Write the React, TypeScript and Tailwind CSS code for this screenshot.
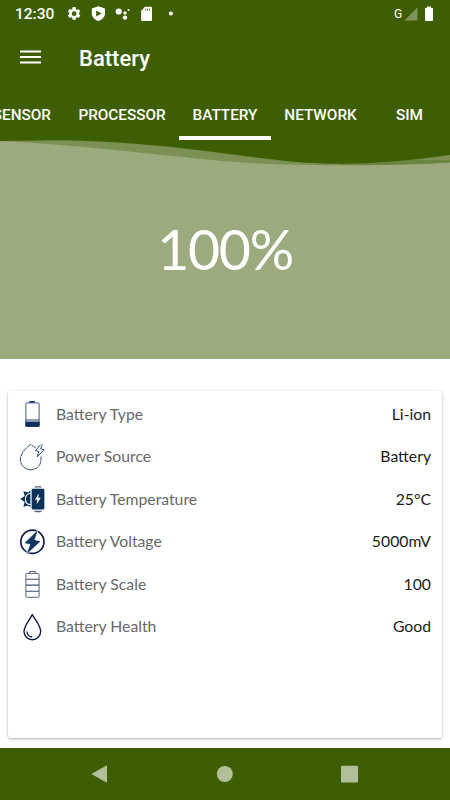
import type { ReactNode } from "react";

const tabs = [
  { label: "SENSOR", width: "w-[79px]" },
  { label: "PROCESSOR", width: "w-[114px]" },
  { label: "BATTERY", width: "w-[92px]", active: true },
  { label: "NETWORK", width: "w-[99px]" },
  { label: "SIM", width: "w-[79px]" },
];

const rows: { icon: ReactNode; label: string; value: string }[] = [
  { icon: <LowBatteryIcon />, label: "Battery Type", value: "Li-ion" },
  { icon: <PowerDropIcon />, label: "Power Source", value: "Battery" },
  { icon: <HotBatteryIcon />, label: "Battery Temperature", value: "25°C" },
  { icon: <VoltageIcon />, label: "Battery Voltage", value: "5000mV" },
  { icon: <ScaleIcon />, label: "Battery Scale", value: "100" },
  { icon: <DropIcon />, label: "Battery Health", value: "Good" },
];

function LowBatteryIcon() {
  return (
    <svg width="28" height="28" viewBox="0 0 28 28" fill="none" stroke="#10315f">
      <path d="M11.3 1.8h5.6" strokeWidth="1.6" />
      <rect x="7.9" y="2.9" width="13.2" height="23.6" rx="1" strokeWidth="0.8" />
      <rect x="7.4" y="21.4" width="14.2" height="5.4" rx="0.8" fill="#10315f" stroke="none" />
      <path d="M8 20h13" strokeWidth="0.9" />
    </svg>
  );
}

function PowerDropIcon() {
  return (
    <svg width="28" height="28" viewBox="0 0 28 28" fill="none" stroke="#173a68" strokeWidth="0.9" strokeLinejoin="round">
      <path d="M17.6 4.9C15.6 3.8 14.2 2.4 12.7 1.5C8.5 4.2 2.4 10 2.4 16.5C2.4 22.5 7 26.8 12.7 26.8C18.6 26.8 23 22.5 23 16.5V13" strokeDasharray="5 0.5" />
      <path d="M22.6 1.6L17.5 7.6L20.8 8.5L19.2 13.8L26 6.7L22.6 5.8L24.4 1.6" />
    </svg>
  );
}

function HotBatteryIcon() {
  return (
    <svg width="28" height="28" viewBox="0 0 28 28" fill="#0b3158">
      <path d="M12.5 5.5L10.2 7.5L5.4 6.2L6.7 11L2.3 14L6.7 17L5.4 21.8L10.2 20.5L12.5 22.5Z" />
      <path d="M12.8 8.2C9.4 8.6 7.4 11 7.4 14C7.4 17 9.4 19.4 12.8 19.8" fill="none" stroke="#fff" strokeWidth="1.1" />
      <rect x="13.2" y="3.3" width="13.6" height="21.6" rx="1.8" stroke="#fff" strokeWidth="0.8" />
      <path d="M16.2 2.5Q16.5 1.3 18 1.2H22Q23.5 1.3 23.8 2.5ZM16 25.8H24Q23.5 27.3 22 27.3H18Q16.5 27.3 16 25.8Z" opacity="0.75" />
      <path d="M20.8 8.2L16.9 14.7H19.3L18.6 19.3L22.8 12.7H20.3Z" fill="#fff" />
    </svg>
  );
}

function VoltageIcon() {
  return (
    <svg width="28" height="28" viewBox="0 0 28 28" fill="none" stroke="#101d4d">
      <circle cx="14.4" cy="13.8" r="11.6" strokeWidth="1.7" />
      <path d="M20.8 0.8L5.8 15.4L11.9 16.5L7.6 27.5L23 13.2L16.9 11.7Z" fill="#0c3560" stroke="#fff" strokeWidth="0.8" />
    </svg>
  );
}

function ScaleIcon() {
  return (
    <svg width="28" height="28" viewBox="0 0 28 28" fill="none" stroke="#3f4f70" strokeWidth="0.9">
      <path d="M11.7 3.4V1.5H17.2V3.4" />
      <rect x="7.9" y="3.4" width="13.2" height="23.9" rx="1.2" />
      <path d="M8 9.2h13M8 15.1h13M8 21.2h13" strokeWidth="1.1" />
    </svg>
  );
}

function DropIcon() {
  return (
    <svg width="28" height="28" viewBox="0 0 28 28" fill="none" stroke="#111c45" strokeWidth="1.4" strokeLinejoin="round">
      <path d="M14.3 1.6C11 7.5 6 13.3 6 18.3C6 23 9.6 26.7 14.3 26.7C19 26.7 22.7 23 22.7 18.3C22.7 13.3 17.6 7.5 14.3 1.6Z" />
      <path d="M8.9 18.5C9.2 21.5 11.2 23.6 14.2 24" strokeWidth="1.3" />
    </svg>
  );
}

function StatusBar() {
  return (
    <div className="flex h-[27px] items-center justify-between pl-[15px] pr-4 text-white">
      <div className="flex items-center">
        <span className="w-[51px] pt-0.5 text-[15.5px] font-medium leading-none">12:30</span>
        <svg width="110" height="18" viewBox="0 0 110 18" fill="#fff">
          <g transform="translate(.2 .8) scale(.66)">
            <path d="M19.14 12.94c.04-.3.06-.61.06-.94s-.02-.64-.07-.94l2.03-1.58a.49.49 0 0 0 .12-.61l-1.92-3.32a.49.49 0 0 0-.59-.22l-2.39.96a7 7 0 0 0-1.62-.94l-.36-2.54A.48.48 0 0 0 13.92 2h-3.84a.48.48 0 0 0-.48.41l-.36 2.54c-.59.24-1.13.57-1.62.94l-2.39-.96a.49.49 0 0 0-.59.22L2.72 8.47a.49.49 0 0 0 .12.61l2.03 1.58c-.05.3-.07.62-.07.94s.02.64.07.94l-2.03 1.58a.49.49 0 0 0-.12.61l1.92 3.32c.12.22.37.29.59.22l2.39-.96c.5.38 1.03.7 1.62.94l.36 2.54c.05.24.24.41.48.41h3.84c.24 0 .44-.17.48-.41l.36-2.54c.59-.24 1.13-.56 1.62-.94l2.39.96c.22.08.47 0 .59-.22l1.92-3.32a.49.49 0 0 0-.12-.61zM12 15.6a3.6 3.6 0 1 1 0-7.2 3.6 3.6 0 0 1 0 7.2z" />
          </g>
          <path fillRule="evenodd" d="M32.4 1.2L39 3.6V8.6C39 12 36.2 14.9 32.4 16.1C28.6 14.9 25.8 12 25.8 8.6V3.6ZM30.2 5.6V11.6L35.5 8.6Z" />
          <circle cx="52.7" cy="6.5" r="3.1" />
          <circle cx="59" cy="8" r="1.7" />
          <circle cx="59" cy="12.6" r="2.2" />
          <circle cx="62.5" cy="5" r="1" />
          <path d="M79 1.8H85Q86 1.8 86 2.8V14.8Q86 16 84.8 16H76.3Q75.1 16 75.1 14.8V6Z" />
          <path d="M79.7 3.5v2.3M81.6 3.5v2.3M83.5 3.5v2.3" stroke="#3e5e03" strokeWidth="0.8" />
          <circle cx="104.9" cy="8.5" r="2.1" />
        </svg>
      </div>
      <div className="flex items-center">
        <span className="w-[9px] text-[12px] leading-none">G</span>
        <svg width="31" height="18" viewBox="0 0 31 18">
          <path d="M14.5 2.5V15.5H1.5Z" fill="#80935b" />
          <path d="M24 1.5h4v1.3h1.2Q30 2.8 30 3.8V15Q30 16 29 16H23Q22 16 22 15V3.8Q22 2.8 23 2.8h1Z" fill="#fff" />
        </svg>
      </div>
    </div>
  );
}

function Header() {
  return (
    <header className="h-[140px] shrink-0 overflow-hidden bg-[#3e5e03]">
      <StatusBar />
      <div className="flex h-[62px] items-center gap-[38px] pl-5">
        <svg width="21" height="16" viewBox="0 0 21 16" stroke="#fff" strokeWidth="2">
          <path d="M0 1.5h21M0 7h21M0 12.5h21" />
        </svg>
        <h1 className="pt-px text-[22px] font-medium leading-none text-white">Battery</h1>
      </div>
      <nav className="-ml-[14px] flex h-[51px] text-[15.3px] font-medium text-white">
        {tabs.map((tab) => (
          <div
            key={tab.label}
            className={`flex shrink-0 items-center justify-center border-b-4 pt-[5px] first:justify-end first:pr-[14px] ${tab.width} ${
              tab.active ? "border-white" : "border-transparent"
            }`}
          >
            {tab.label}
          </div>
        ))}
      </nav>
    </header>
  );
}

function Hero() {
  return (
    <section className="flex h-[218.5px] shrink-0 flex-col bg-[#9bab7d]">
      <svg className="shrink-0" width="450" height="26" viewBox="0 0 450 26">
        <path d="M0 0H450V22.5C380 27 275 25.5 225 21.3C150 14 70 4 0 1Z" fill="#7b9053" />
        <path d="M340 20H450V22.5C415 24.5 375 25.2 340 25Z" fill="#6b843f" />
        <path d="M0 0H450V15C415 20 375 23.8 340 23.8C300 23.8 265 18.5 225 13.5C175 7 120 1 60 0.3L0 1Z" fill="#3e5e03" />
      </svg>
      <p className="mt-[49px] text-center font-[Lato,sans-serif] text-[55.5px] leading-[68px] tracking-[-1.4px] text-white">100%</p>
    </section>
  );
}

export default function App() {
  return (
    <div className="flex h-[800px] w-[450px] flex-col overflow-hidden bg-white font-[Roboto,sans-serif]">
      <Header />
      <Hero />
      <main className="flex-1 px-2 pb-[9.5px] pt-8 font-[Lato,sans-serif]">
        <div className="h-full rounded-[3px] bg-white pt-[2.5px] shadow-[0_1px_3px_rgba(0,0,0,0.32)]">
          {rows.map((row) => (
            <div key={row.label} className="flex h-[42.5px] items-center pl-[10px] pr-[11px] text-[15.75px]">
              {row.icon}
              <span className="ml-[10px] pb-px text-[#686868]">{row.label}</span>
              <span className="ml-auto pb-px text-[#1c1c1c]">{row.value}</span>
            </div>
          ))}
        </div>
      </main>
      <footer className="flex h-[52.5px] shrink-0 bg-[#3e5e03]">
        <svg width="450" height="52" viewBox="0 0 450 52" fill="#b2bf9b">
          <path d="M107 17.3V34.8L91.3 26Z" />
          <circle cx="224.8" cy="26" r="8" />
          <rect x="341" y="17.7" width="17" height="16.8" rx="1" />
        </svg>
      </footer>
    </div>
  );
}
